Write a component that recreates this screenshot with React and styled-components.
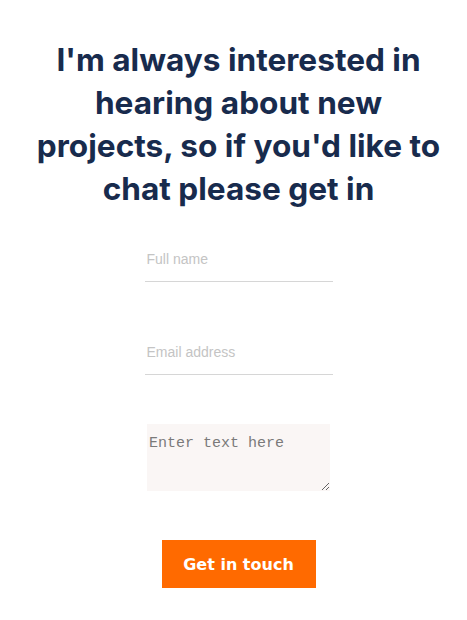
import styled, { createGlobalStyle } from "styled-components"

const Global = createGlobalStyle`
  body {
    margin: 0;
    background: #ffffff;
  }
`

function App() {
  return (
    <>
      <Global />
      <Wrapper>
        <Heading>
          I'm always interested in hearing about new projects, so if you'd like to chat please get in
        </Heading>

        <Form onSubmit={(e) => e.preventDefault()}>
          <Field type="text" placeholder="Full name" />
          <Field type="email" placeholder="Email address" />
          <Message placeholder="Enter text here" />
          <Button type="submit">Get in touch</Button>
        </Form>
      </Wrapper>
    </>
  )
}

export default App

const Wrapper = styled.div`
  width: 467px;
  padding: 38px 16px 0 26px;
  box-sizing: border-box;
  display: flex;
  flex-direction: column;
  align-items: center;
`

const Heading = styled.h1`
  margin: 0;
  max-width: 410px;
  font-family: Inter, "Noto Sans", sans-serif;
  font-weight: 700;
  font-size: 31.6px;
  line-height: 43px;
  color: #182b4d;
  text-align: center;
`

const Form = styled.form`
  margin-top: 28px;
  display: flex;
  flex-direction: column;
  align-items: center;
`

const Field = styled.input`
  width: 188px;
  height: 44px;
  box-sizing: border-box;
  border: none;
  border-bottom: 1px solid #d6d6d6;
  padding: 0 2px 2px;
  margin-bottom: 49px;
  font-family: "Liberation Sans", Arial, sans-serif;
  font-size: 14px;
  color: #333;
  outline: none;
  background: transparent;

  &::placeholder {
    color: #c4c4c4;
  }
`

const Message = styled.textarea`
  width: 183px;
  height: 67px;
  box-sizing: border-box;
  border: none;
  padding: 11px 2px;
  background: #faf6f5;
  font-family: "Liberation Mono", "Courier New", monospace;
  font-size: 15px;
  color: #444;
  outline: none;

  &::placeholder {
    color: #7a7a7a;
  }
`

const Button = styled.button`
  margin-top: 49px;
  width: 154px;
  height: 48px;
  border: none;
  background: #ff6a00;
  color: #ffffff;
  font-family: "DejaVu Sans", Verdana, sans-serif;
  font-weight: 700;
  font-size: 16px;
  cursor: pointer;
`
